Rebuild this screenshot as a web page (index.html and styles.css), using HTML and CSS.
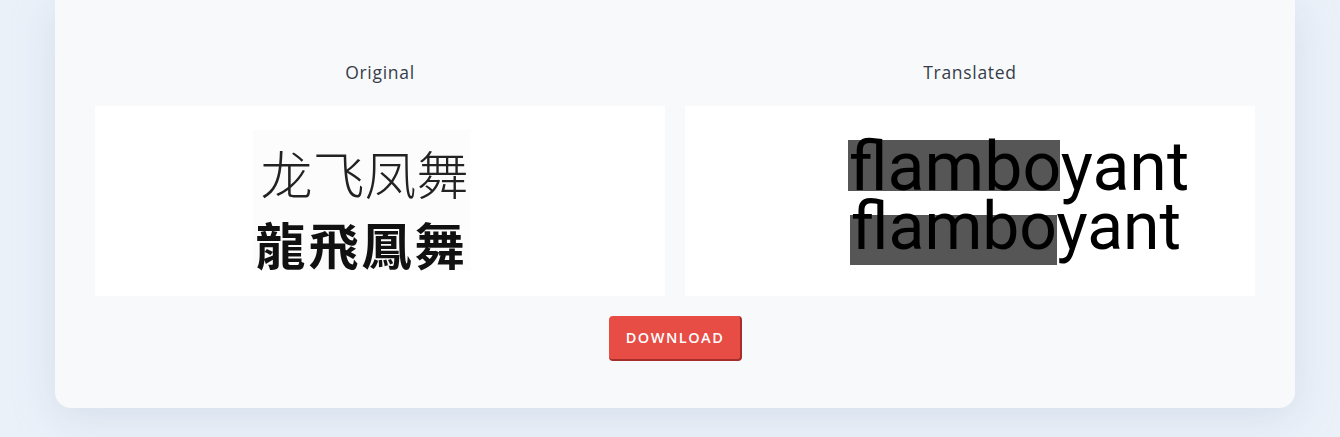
FILE: index.html
```html
<!DOCTYPE html>
<html lang="en">
<head>
<meta charset="utf-8">
<title>Translate</title>
<link rel="stylesheet" href="styles.css">
</head>
<body>
<div class="card">
  <div class="panels">
    <div class="panel">
      <div class="label">Original</div>
      <div class="frame frame-original">
        <div class="scan">
          <div class="han light" lang="zh-CN">龙飞凤舞</div>
          <div class="han bold" lang="zh-TW">龍飛鳳舞</div>
        </div>
      </div>
    </div>
    <div class="panel">
      <div class="label">Translated</div>
      <div class="frame frame-translated">
        <div class="render">
          <span class="mask mask-1"></span>
          <span class="mask mask-2"></span>
          <div class="word word-1">flamboyant</div>
          <div class="word word-2">flamboyant</div>
        </div>
      </div>
    </div>
  </div>
  <div class="actions">
    <button class="btn-download" type="button">DOWNLOAD</button>
  </div>
</div>
</body>
</html>
```

FILE: styles.css
```css
html, body {
  margin: 0;
  padding: 0;
}
body {
  background: #ebf1f9;
  font-family: "Open Sans", "Liberation Sans", sans-serif;
  height: 437px;
  overflow: hidden;
}
.card {
  margin: 0 45px 0 55px;
  width: 1240px;
  box-sizing: border-box;
  background: #f8f9fb;
  border-radius: 0 0 16px 16px;
  padding: 58px 40px 47px;
  box-shadow: 0 8px 40px rgba(170, 185, 210, 0.35);
}
.panels {
  display: grid;
  grid-template-columns: 570px 570px;
  column-gap: 20px;
}
.panel {
  display: flex;
  flex-direction: column;
}
.label {
  text-align: center;
  font-size: 17.5px;
  line-height: 28px;
  letter-spacing: 0.7px;
  color: #363c48;
  margin-bottom: 20px;
}
.frame {
  background: #ffffff;
  height: 190px;
  box-sizing: border-box;
}
.frame-original {
  padding: 24px 0 0 158px;
}
.scan {
  width: 217px;
  height: 140px;
  background: #fcfcfc;
  display: flex;
  flex-direction: column;
  align-items: center;
  padding-top: 6px;
  box-sizing: border-box;
}
.han {
  font-size: 52px;
  line-height: 74px;
  color: #111;
  white-space: nowrap;
}
.han.light {
  font-family: "Noto Sans CJK SC", sans-serif;
  font-weight: 300;
  color: #222;
  margin-left: 6px;
}
.han.bold {
  font-family: "Noto Sans CJK TC", sans-serif;
  font-weight: 700;
  font-size: 50px;
  letter-spacing: 3px;
  margin-top: -4px;
}
.frame-translated {
  padding: 31px 0 0 163px;
}
.render {
  position: relative;
  width: 345px;
  height: 130px;
}
.mask {
  position: absolute;
  background: #565656;
}
.mask-1 {
  left: 0;
  top: 3px;
  width: 212px;
  height: 51px;
}
.mask-2 {
  left: 2px;
  top: 78px;
  width: 207px;
  height: 50px;
}
.word {
  position: relative;
  font-family: Roboto, "Liberation Sans", sans-serif;
  color: #000;
  line-height: 60px;
  white-space: nowrap;
}
.word-1 {
  font-size: 68px;
  margin-left: 1px;
}
.word-2 {
  font-size: 66px;
  margin-left: 3px;
}
.actions {
  display: flex;
  justify-content: center;
  margin-top: 20px;
}
.btn-download {
  width: 133px;
  height: 45px;
  box-sizing: border-box;
  background: #e74c45;
  border: none;
  border-right: 2px solid #a52e2a;
  border-bottom: 2px solid #a52e2a;
  border-radius: 4px;
  color: #ffffff;
  font-family: "Open Sans", "Liberation Sans", sans-serif;
  font-size: 14.5px;
  font-weight: 600;
  letter-spacing: 1.5px;
  padding: 0 0 0 2px;
  cursor: pointer;
}
```
